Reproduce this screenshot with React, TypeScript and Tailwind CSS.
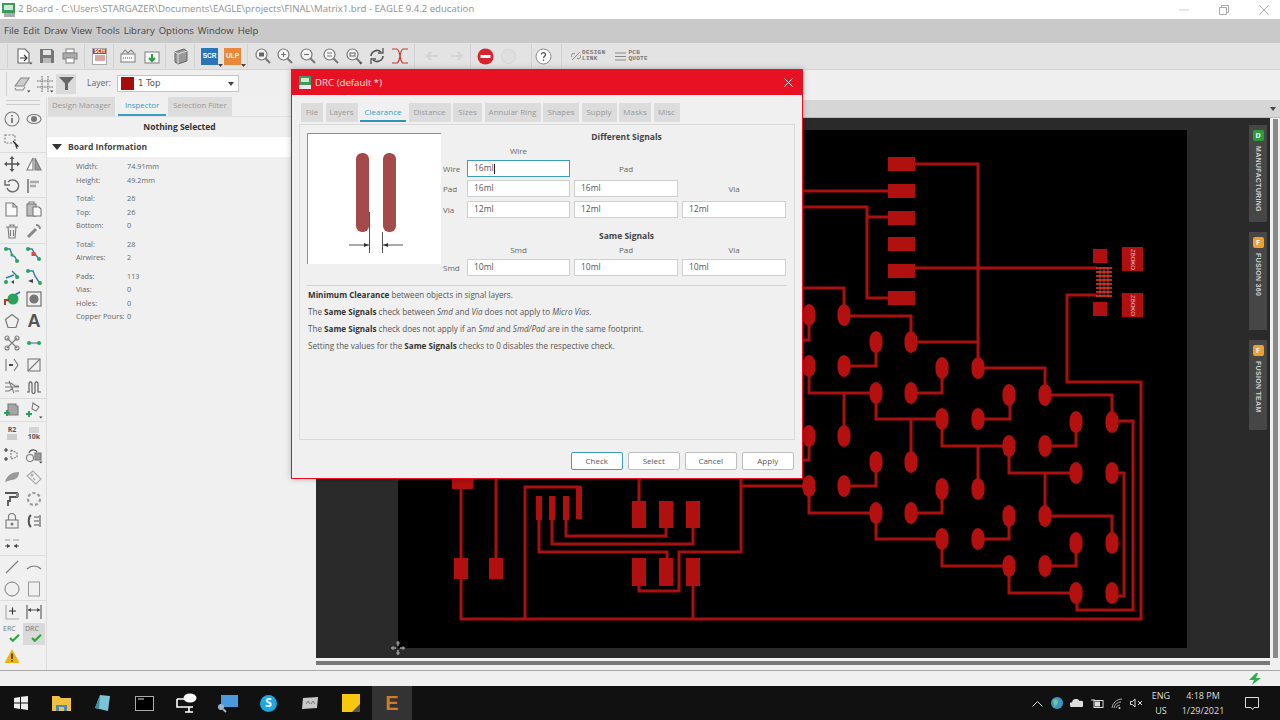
import React from "react";

const F = { fontFamily: '"Open Sans", "Liberation Sans", sans-serif' };

const Ic = ({ children, w = 18, h = 18, c = "#7a7a7a", sw = 1.1, vb }: any) => (
  <svg width={w} height={h} viewBox={vb || "0 0 18 18"} fill="none" stroke={c} strokeWidth={sw}>
    {children}
  </svg>
);
const Drop = () => <path d="M14 15.5h3.5l-1.75 2z" fill="#444" stroke="none" />;

const G = "#27a35a";
const B = "#2d7fa8";

const tools: any[][] = [
  [
    <Ic><circle cx="9" cy="9" r="7" /><path d="M9 8v5M9 5v1.4" strokeWidth="1.6" stroke="#666" /></Ic>,
    <Ic><ellipse cx="9" cy="9" rx="7" ry="4.5" /><circle cx="9" cy="9" r="3" fill="#777" stroke="none" /></Ic>,
  ],
  [
    <Ic><rect x="2" y="3" width="10" height="8" strokeDasharray="2 1.5" /><path d="M10 9l5 5-2 .3 1.2 2.4" stroke="#333" fill="#333" /></Ic>,
    null,
  ],
  "sep",
  [
    <Ic c="#555" sw="1.5"><path d="M9 2v14M2 9h14" /><path d="M9 1l2.5 3h-5zM9 17l2.5-3h-5zM1 9l3-2.5v5zM17 9l-3-2.5v5z" fill="#555" stroke="none" /></Ic>,
    <Ic><path d="M8 3v12H2z" fill="#fff" /><path d="M10 3v12h6z" fill="#999" /></Ic>,
  ],
  [
    <Ic c="#666" sw="1.4"><path d="M5 5a6 6 0 1 1-1 6" /><path d="M2 3v5h5" /></Ic>,
    <Ic><path d="M3 2v14" stroke="#666" strokeWidth="1.4" /><path d="M5 5h9M5 9h6" strokeWidth="2.4" stroke="#aaa" /></Ic>,
  ],
  "sep",
  [
    <Ic><path d="M3 3h7l4 4v9H3z" fill="#f8f8f8" /><path d="M10 3v4h4" /></Ic>,
    <Ic><rect x="2" y="4" width="9" height="12" fill="#bbb" /><path d="M8 7h6l2 2v7H8z" fill="#f8f8f8" /><path d="M4 4V2h5v2" /></Ic>,
  ],
  [
    <Ic><path d="M3 5h12M5 5l1 11h6l1-11M7 5V3h4v2" /><path d="M7.5 8v6M10.5 8v6" /></Ic>,
    <Ic c="#888" sw="3"><path d="M3 15l8-8" /><path d="M11 3a4 4 0 0 1 4 4" strokeWidth="2" /></Ic>,
  ],
  "sep2",
  [
    <Ic c={B} sw="1.4"><path d="M3 3h4l2 6 3 2 2 4" /><circle cx="3" cy="3" r="2" fill={G} stroke="none" /><circle cx="14" cy="15" r="2" fill={G} stroke="none" /><circle cx="9" cy="9" r="1.6" fill={G} stroke="none" /></Ic>,
    <Ic c={B} sw="1.4"><path d="M3 3h4l3 5 4 5" /><circle cx="3" cy="3" r="2" fill={G} stroke="none" /><rect x="6.5" y="6" width="4" height="4" fill="#d84b4b" stroke="none" /><circle cx="14" cy="13" r="2" fill={G} stroke="none" /></Ic>,
  ],
  [
    <Ic c={B} sw="1.4"><path d="M9 3l7 7M3 10l8-3" /><circle cx="3" cy="14" r="2" fill={G} stroke="none" /><circle cx="14" cy="9" r="2" fill={G} stroke="none" /><path d="M8 14l3-2v4z" fill="#444" stroke="none" /></Ic>,
    <Ic c={B} sw="1.4"><path d="M3 3h5l2 5 4 6" /><circle cx="3" cy="3" r="2" fill={G} stroke="none" /><circle cx="15" cy="15" r="2" fill={G} stroke="none" /><path d="M3 13l5-2v4z" fill="#444" stroke="none" /></Ic>,
  ],
  [
    <Ic c="#b0392b" sw="2"><circle cx="10" cy="9" r="5.5" fill={G} stroke="none" /><path d="M2 15v-5h4" /><path d="M12 5l5-3" stroke={B} /></Ic>,
    <Ic><rect x="2" y="2" width="14" height="14" stroke="#666" /><circle cx="9" cy="9" r="4.6" fill="#777" stroke="none" /></Ic>,
  ],
  [
    <Ic sw="1.2"><path d="M9 2.5l6.5 5-2.5 8H5l-2.5-8z" /></Ic>,
    <span className="text-[18px] font-bold leading-none text-[#555]" style={{ fontFamily: '"Liberation Sans", sans-serif' }}>A</span>,
  ],
  [
    <Ic><path d="M4 4l10 10M14 4L4 14" /><circle cx="4" cy="4" r="2" /><circle cx="14" cy="4" r="2" /><circle cx="4" cy="14" r="2" /><circle cx="14" cy="14" r="2" /></Ic>,
    <Ic c={B}><path d="M4 9h10" /><circle cx="4" cy="9" r="2" fill={G} stroke="none" /><circle cx="14" cy="9" r="2" fill={G} stroke="none" /></Ic>,
  ],
  [
    <Ic><path d="M3 3v12M11 3l4 6-4 6" /><path d="M6 9h4" stroke="#333" strokeWidth="1.8" /></Ic>,
    <Ic><rect x="3" y="3" width="12" height="12" /><path d="M3 15L15 3" /></Ic>,
  ],
  [
    <Ic><path d="M2 5h6l4 3h4M2 9h14M2 13h4l4-3M12 13h4M6 3l5 12" /></Ic>,
    <Ic c="#555"><path d="M2 14h2V6c0-3 3-3 3 0v8c0 2 3 2 3 0V6c0-3 3-3 3 0v8h3" /></Ic>,
  ],
  "sep",
  [
    <Ic><path d="M5 3h8v2h2v9H5z" fill="#a5a5a5" /><path d="M1 12h6M4 9v6" stroke="#27a35a" strokeWidth="2" /></Ic>,
    <Ic><path d="M8 2l6 4-3 4-4-2z" fill="#f4f4f4" /><path d="M1 13h6M4 10v6" stroke="#27a35a" strokeWidth="2" /><Drop /></Ic>,
  ],
  "sep",
  [
    <div className="flex flex-col items-center leading-none"><span className="text-[7px] font-bold text-[#555]">R2</span><span className="mt-px h-[6px] w-[10px] bg-[#ccc]" /></div>,
    <div className="flex flex-col items-center leading-none"><span className="h-[6px] w-[10px] bg-[#d4d4d4]" /><span className="text-[7px] font-bold text-[#555]">10k</span></div>,
  ],
  [
    <Ic><path d="M8 4l6 3v4l-6 2z" strokeDasharray="2 1" /><path d="M1 4h4M3 2v4M1 13h4M3 11v4" stroke="#333" /></Ic>,
    <Ic><circle cx="5" cy="12" r="3.5" /><rect x="10" y="7" width="6" height="7" fill="#999" /><path d="M4 7c1-4 7-4 8-1" stroke="#555" /><Drop /></Ic>,
  ],
  [
    <Ic c="#999" sw="0"><path d="M2 14C4 7 9 4 16 4c0 6-4 8-8 8l-3 1z" fill="#999" /></Ic>,
    <Ic c="#aaa"><path d="M2 8l6-5 8 8-5 5z" /><circle cx="7" cy="7" r="1" /><path d="M8 10l2 2" /></Ic>,
  ],
  [
    <Ic c="#555" sw="1.8"><path d="M2 3h12v4H7v4H5v5" /><rect x="13" y="3" width="3" height="4" fill="#888" stroke="none" /></Ic>,
    <Ic c="#999" sw="2.2"><circle cx="9" cy="9" r="6" strokeDasharray="3 2.2" /></Ic>,
  ],
  [
    <Ic><rect x="3" y="8" width="12" height="8" /><path d="M5.5 8V5a3.5 3.5 0 0 1 7 0v3" /><circle cx="9" cy="12" r="1" fill="#666" /></Ic>,
    <Ic c="#555"><path d="M6 3C3 5 3 13 6 15" strokeWidth="2" /><path d="M9 5h5M9 9h5M9 13h5M15 3v12" /></Ic>,
  ],
  [
    <Ic c="#444"><path d="M2 6h5M10 6h6" stroke="#999" /><path d="M2 12h5M16 12h-5" /><path d="M7 12l-3-2.2v4.4zM11 12l3-2.2v4.4z" fill="#444" stroke="none" /></Ic>,
    null,
  ],
  "sep2",
  [
    <Ic><path d="M3 15L15 3" /></Ic>,
    <Ic><path d="M2 11c4-4 10-4 14 0" /></Ic>,
  ],
  [
    <Ic sw="1"><circle cx="9" cy="9" r="7" /></Ic>,
    <Ic sw="1" c="#999"><rect x="3.5" y="2" width="11" height="14" /></Ic>,
  ],
  "sep",
  [
    <Ic><path d="M3 2v14h13" stroke="#aaa" /><path d="M6 8h7M9.5 4.5v7" stroke="#333" /></Ic>,
    <Ic c="#555"><path d="M2 2v14M16 2v14M3 7h12" /><path d="M3 7l3-2v4zM15 7l-3-2v4z" fill="#444" stroke="none" /></Ic>,
  ],
  [
    <div className="relative h-[18px] w-[18px]"><span className="absolute left-0 top-0 text-[7px] leading-[8px] text-[#777]">ERC</span><svg className="absolute left-[6px] top-[8px]" width="11" height="9" viewBox="0 0 13 11"><path d="M1 6l3.5 3.500L12 2" stroke="#2aa838" strokeWidth="2.6" fill="none" /></svg></div>,
    <div className="relative h-[18px] w-[18px]"><span className="absolute left-0 top-0 text-[7px] leading-[8px] text-[#777]">DRC</span><svg className="absolute left-[6px] top-[8px]" width="11" height="9" viewBox="0 0 13 11"><path d="M1 6l3.5 3.500L12 2" stroke="#2aa838" strokeWidth="2.6" fill="none" /></svg></div>,
  ],
  [
    <Ic sw="0"><path d="M9 2l7.5 14h-15z" fill="#eeb211" /><path d="M8.2 6.5h1.6v5.5H8.2zM8.2 13h1.6v1.6H8.2z" fill="#333" /></Ic>,
    null,
  ],
];

const ToolColumn = () => (
  <div className="flex h-full w-[47px] shrink-0 flex-col border-r border-[#dcdcdc] bg-[#f0f0f0]" style={F}>
    <div className="flex h-[11px] flex-col justify-center gap-[3px] px-[6px]">
      <div className="h-px bg-[#ccc]" />
      <div className="h-px bg-[#ccc]" />
    </div>
    {tools.map((r, i) =>
      r === ("sep" as any) ? (
        <div key={i} className="h-px bg-[#dcdcdc]" />
      ) : r === ("sep2" as any) ? (
        <div key={i} className="h-[2px] border-b border-[#dcdcdc]" />
      ) : (
        <div key={i} className="flex h-[22px] pl-px">
          {r.map((x: any, j: number) => (
            <div key={j} className={`flex h-[22px] w-[22px] items-center justify-center ${i === tools.length - 2 && j === 1 ? "bg-[#d9d9d9]" : ""}`}>
              {x}
            </div>
          ))}
        </div>
      )
    )}
  </div>
);

const info = [
  ["Width:", "74.91mm", 0],
  ["Height:", "49.2mm", 0],
  ["Total:", "26", 5],
  ["Top:", "26", 0],
  ["Bottom:", "0", 0],
  ["Total:", "28", 5],
  ["Airwires:", "2", 0],
  ["Pads:", "113", 5],
  ["Vias:", "0", 0],
  ["Holes:", "0", 0],
  ["Copper Pours:", "0", 0],
] as [string, string, number][];

const LeftPanel = () => (
  <div className="flex h-full w-[269px] shrink-0 flex-col bg-[#f0f0f0]" style={F}>
    <div className="flex h-[20px] items-stretch gap-[2px] border-b border-[#e2e2e2] pl-px text-[7.8px] leading-[17px]">
      <div className="w-[67px] bg-[#dcdcdc] text-center text-[#999]">Design Manager</div>
      <div className="ml-[1px] w-[48px] border-b-2 border-[#3a9ec2] text-center text-[#3a9ec2]">Inspector</div>
      <div className="w-[64px] bg-[#dcdcdc] text-center text-[#999]">Selection Filter</div>
    </div>
    <div className="flex h-[20px] items-center justify-center pr-[4px] text-[8.5px] font-bold text-[#333]">Nothing Selected</div>
    <div className="flex h-[20px] items-center bg-white pl-[5px] text-[8.5px] font-bold text-[#444]">
      <svg width="10" height="6" viewBox="0 0 10 6"><path d="M0 0h10L5 6z" fill="#333" /></svg>
      <span className="ml-[6px]">Board Information</span>
    </div>
    <div className="pl-[29px] pt-[3px] text-[7.3px] text-[#666]">
      {info.map(([a, b, m], i) => (
        <div key={i} className="flex h-[13.5px] items-center" style={{ marginTop: m }}>
          <span className="w-[51px] shrink-0 whitespace-nowrap">{a}</span>
          <span>{b}</span>
        </div>
      ))}
    </div>
  </div>
);

const traces = [
  "M915 164H978V370",
  "M800 191H888",
  "M800 207H867V298H888M867 217H888",
  "M915 268H1097",
  "M1097 295H1067V382H1141V619H461V478",
  "M800 288H844V315M844 316H911V342H978",
  "M809 315V340H800",
  "M844 366H876V342",
  "M978 368H1045V395",
  "M942 368V393H911",
  "M809 366V393H876V419H942V446H1009V473H1076",
  "M844 393V436",
  "M911 419V462",
  "M978 446V489",
  "M1045 473V516",
  "M978 419H1010V395",
  "M1045 395H1112V422",
  "M1045 446H1076V422",
  "M1112 421H1133V610H1077V593",
  "M1112 473H1124V596H1112",
  "M844 486H876V462",
  "M809 436V460H800",
  "M800 486H809V513H876V539H942V566H1009V593H1076",
  "M911 513H942V489",
  "M978 539H1009V516",
  "M1045 566H1076V543",
  "M1045 516H1112V543",
  "M496 478V560",
  "M525 619V487H580V500",
  "M539 510V552H667V560",
  "M552 510V544H693V525",
  "M566 510V536H666V525",
  "M639 478V502",
  "M639 584V591H679V552H741V478",
  "M741 486H800",
  "M693 584V619",
];

const ovals = [
  [844, 315], [809, 315], [911, 342], [876, 342], [809, 366], [844, 366], [942, 368], [978, 368],
  [876, 393], [911, 393], [1009, 395], [1045, 395], [942, 419], [978, 419], [1076, 422], [1112, 422],
  [809, 436], [844, 436], [1009, 446], [1045, 446], [876, 462], [911, 462], [1076, 473], [1112, 473],
  [809, 486], [844, 486], [942, 489], [978, 489], [876, 513], [911, 513], [1009, 516], [1045, 516],
  [942, 539], [978, 539], [1076, 543], [1112, 543], [1009, 566], [1045, 566], [1076, 593], [1112, 593],
];

const rects = [
  [888, 157, 27, 14], [888, 184, 27, 14], [888, 211, 27, 14], [888, 237, 27, 14], [888, 264, 27, 14], [888, 291, 27, 14],
  [1093, 249, 14, 14], [1093, 302, 14, 14], [1122, 247, 21, 24], [1122, 293, 21, 24],
  [452, 470, 21, 19], [454, 558, 14, 21], [489, 558, 14, 21],
  [576, 487, 6, 32], [536, 496, 6, 24], [549, 496, 6, 24], [563, 496, 6, 24],
  [632, 501, 14, 27], [659, 501, 14, 27], [686, 501, 14, 27], [632, 558, 14, 28], [659, 558, 14, 28], [686, 558, 14, 28],
];

const Board = () => (
  <svg className="ml-[82px] mt-[12px] shrink-0" width="789" height="518" viewBox="398 130 789 518">
    <rect x="398" y="130" width="789" height="518" fill="#000" />
    <path d={traces.join(" ")} stroke="#ab1010" strokeWidth="3" fill="none" />
    {rects.map(([x, y, w, h], i) => (
      <rect key={i} x={x} y={y} width={w} height={h} fill="#b01010" />
    ))}
    {ovals.map(([x, y], i) => (
      <rect key={i} x={x - 6.5} y={y - 11} width="13" height="22" rx="6.5" ry="9" fill="#b51010" />
    ))}
    {[268, 272, 276, 280, 284, 288, 292, 296].map((y) => (
      <path key={y} d={`M1096 ${y}H1112`} stroke="#e23a1e" strokeWidth="1.6" />
    ))}
    <path d="M1100 267V297M1104 267V297M1108 267V297" stroke="#e23a1e" strokeWidth="1" />
    <text transform="translate(1131 249) rotate(90)" fontSize="6" fill="#f3c8c8" fontFamily="Liberation Sans">ZBOKO</text>
    <text transform="translate(1131 295) rotate(90)" fontSize="6" fill="#f3c8c8" fontFamily="Liberation Sans">ZBOKO</text>
  </svg>
);

const SideTab = ({ t, h, c, l }: any) => (
  <div className="flex w-[18px] flex-col items-center bg-[#464646] pt-[5px]" style={{ height: h }}>
    <div className="flex h-[11px] w-[11px] items-center justify-center rounded-[2px] text-[7px] font-bold leading-none" style={{ background: c, color: "#fff" }}>{l}</div>
    <span className="mt-[5px] text-[7px] font-bold tracking-[0.3px] text-[#d0d0d0] [writing-mode:vertical-rl]" style={{ fontFamily: '"Liberation Sans", sans-serif' }}>{t}</span>
  </div>
);

const Canvas = () => (
  <div className="relative flex min-w-0 flex-1 flex-col" style={F}>
    <div className="h-[3px] bg-[#f0f0f0]" />
    <div className="flex h-[18px] items-center justify-end border-b border-[#bbb] bg-[#d6d6d6] pr-[4px]">
      <svg width="6" height="4" viewBox="0 0 6 4"><path d="M0 0h6L3 4z" fill="#444" /></svg>
    </div>
    <div className="flex min-h-0 flex-1">
      <div className="flex min-w-0 flex-1 bg-[#2a2a2a]">
        <Board />
        <div className="flex-1" />
        <div className="mr-[3px] mt-[7px] flex flex-col gap-[10px]">
          <SideTab t="MANUFACTURING" h={97} c="#2d9c3c" l="D" />
          <SideTab t="FUSION 360" h={98} c="#eda128" l="F" />
          <SideTab t="FUSION TEAM" h={90} c="#eda128" l="F" />
        </div>
      </div>
      <div className="flex w-[10px] justify-center bg-[#f0f0f0] pt-px">
        <div className="h-full w-[5px] bg-[#8a8a8a]" />
      </div>
    </div>
    <div className="h-[12px] bg-[#f0f0f0] pr-[10px] pt-[3px]">
      <div className="h-[4px] bg-[#787878]" />
    </div>
  </div>
);

const tabs = [
  ["File", 22], ["Layers", 32], ["Clearance", 46], ["Distance", 42], ["Sizes", 29],
  ["Annular Ring", 56], ["Shapes", 36], ["Supply", 35], ["Masks", 32], ["Misc", 26],
] as [string, number][];

const Inp = ({ v, focus }: any) => (
  <div className={`flex h-[17px] items-center bg-white pl-[6px] text-[8.5px] text-[#555] ${focus ? "border border-[#3d9dbd]" : "border border-[#cfcfcf]"}`}>
    {v}
    {focus && <span className="ml-[0.5px] h-[10px] w-px bg-[#222]" />}
  </div>
);

const FRow = ({ children, cls = "h-[17px]" }: any) => (
  <div className={`grid grid-cols-[20px_103px_104px_104px] items-center gap-x-[4px] text-[8px] text-[#666] ${cls}`}>{children}</div>
);
const Hd = ({ children }: any) => <div className="text-center">{children}</div>;

const Dialog = () => (
  <div className="absolute left-[291px] top-[69px] flex h-[410px] w-[512px] flex-col border border-[#e81123] bg-[#f0f0f0] shadow-[0_0_6px_rgba(0,0,0,0.25)]" style={F}>
    <div className="flex h-[25px] shrink-0 items-center bg-[#e81123] pl-[7px] pr-[9px] text-[#fde2e4]">
      <svg width="12" height="13" viewBox="0 0 12 13"><rect x="0" y="0" width="12" height="9" fill="#3d9a5c" /><rect x="2" y="2" width="8" height="4" fill="#cfe8d4" /><rect x="0" y="9" width="12" height="4" fill="#e8e8e8" /></svg>
      <span className="ml-[4px] text-[9.7px] leading-none">DRC (default *)</span>
      <svg className="ml-auto" width="9" height="9" viewBox="0 0 9 9"><path d="M0.5 0.5l8 8M8.5 0.5l-8 8" stroke="#fff" strokeWidth="1" /></svg>
    </div>
    <div className="mt-[8px] flex h-[19px] items-stretch gap-[2.5px] pl-[9px] text-[8px] leading-[18px]">
      {tabs.map(([t, w]) => (
        <div key={t} style={{ width: w }} className={`text-center ${t === "Clearance" ? "border-b-2 border-[#2f93b8] text-[#3a9ec2]" : "bg-[#dcdcdc] text-[#999]"}`}>{t}</div>
      ))}
    </div>
    <div className="ml-[7px] mt-[2px] h-[316px] w-[496px] border border-[#d9d9d9] pl-[7px] pt-[8px]">
      <div className="flex h-[143px] items-start">
        <svg className="shrink-0" width="134" height="131" viewBox="307 133 134 131">
          <rect x="307" y="133" width="134" height="131" fill="#fff" />
          <path d="M307.5 264V133.5H441" stroke="#8c8c8c" fill="none" />
          <rect x="356" y="153" width="13" height="79" rx="6" fill="#a54a4a" />
          <rect x="383" y="153" width="13" height="79" rx="6" fill="#a54a4a" />
          <path d="M369.5 212V253M382.5 232V253" stroke="#555" strokeWidth="1" />
          <path d="M349 245H369M383 245H403" stroke="#555" strokeWidth="1" />
          <path d="M369 245l-5-2v4zM383 245l5-2v4z" fill="#333" />
        </svg>
        <div className="ml-[2px] -mt-[3px]">
          <div className="h-[14px] pl-[24px] text-center text-[8.5px] font-bold leading-[14px] text-[#444]">Different Signals</div>
          <FRow cls="h-[14px]"><span /><Hd>Wire</Hd></FRow>
          <FRow cls="mt-[2px] h-[17px]"><span>Wire</span><Inp v="16ml" focus /><Hd>Pad</Hd></FRow>
          <FRow cls="mt-[3px] h-[17px]"><span>Pad</span><Inp v="16ml" /><Inp v="16ml" /><Hd>Via</Hd></FRow>
          <FRow cls="mt-[4px] h-[17px]"><span>Via</span><Inp v="12ml" /><Inp v="12ml" /><Inp v="12ml" /></FRow>
          <div className="mt-[11px] h-[14px] pl-[24px] text-center text-[8.5px] font-bold leading-[14px] text-[#444]">Same Signals</div>
          <FRow cls="h-[14px]"><span /><Hd>Smd</Hd><Hd>Pad</Hd><Hd>Via</Hd></FRow>
          <FRow cls="mt-[2px] h-[17px]"><span>Smd</span><Inp v="10ml" /><Inp v="10ml" /><Inp v="10ml" /></FRow>
        </div>
      </div>
      <div className="mr-[7px] mt-[9px] h-px bg-[#d4d4d4]" />
      <div className="ml-px flex flex-col text-[8.1px] leading-[17.3px] text-[#555]">
        <p className="-mt-[0.5px]"><b className="text-[#333]">Minimum Clearance</b> between objects in signal layers.</p>
        <p>The <b className="text-[#333]">Same Signals</b> check between <i>Smd</i> and <i>Via</i> does not apply to <i>Micro Vias</i>.</p>
        <p>The <b className="text-[#333]">Same Signals</b> check does not apply if an <i>Smd</i> and <i>Smd/Pad</i> are in the same footprint.</p>
        <p>Setting the values for the <b className="text-[#333]">Same Signals</b> checks to 0 disables the respective check.</p>
      </div>
    </div>
    <div className="mr-[8px] mt-[12px] flex justify-end gap-[4.5px] text-[8px] text-[#555]">
      {["Check", "Select", "Cancel", "Apply"].map((b, i) => (
        <div key={b} className={`flex h-[18px] w-[52.5px] items-center justify-center rounded-[2px] bg-white ${i === 0 ? "border border-[#3d9dbd]" : "border border-[#bdbdbd]"}`}>{b}</div>
      ))}
    </div>
  </div>
);

const Sep = ({ cls }: any) => <div className={`h-[24px] w-px shrink-0 bg-[#d2d2d2] ${cls}`} />;
const T = ({ children }: any) => <div className="relative flex h-[24px] w-[23px] shrink-0 items-center justify-center">{children}</div>;
const Mag = ({ s }: any) => (
  <Ic c="#777" sw="1.2"><circle cx="7.5" cy="7.5" r="5.5" fill="#f5f5f5" /><path d="M11.5 11.5l4.5 4.5" strokeWidth="2" />{s}</Ic>
);
const Badge = ({ t, c }: any) => (
  <div className="relative">
    <div className="flex h-[17px] w-[17px] items-center justify-center text-[6.5px] font-bold leading-none text-white" style={{ background: c, fontFamily: '"Liberation Sans", sans-serif' }}>{t}</div>
    <svg className="absolute -bottom-[2px] -right-[5px]" width="5" height="3" viewBox="0 0 5 3"><path d="M0 0h5L2.5 3z" fill="#444" /></svg>
  </div>
);

const Toolbar = () => (
  <div className="flex h-[27px] items-center border-b border-[#d2d2d2] bg-[#e3e3e3] pl-[7px]" style={F}>
    <Sep cls="mr-[4px]" />
    <T><Ic c="#666"><path d="M3 2h7l4 4v10H3z" fill="#fff" /><path d="M5 11h7M9 8l3 3-3 3" stroke="#333" /><Drop /></Ic></T>
    <T><Ic c="#777" sw="0"><path d="M2 2h12l2 2v12H2z" fill="#777" /><rect x="5" y="3" width="8" height="5" fill="#e5e5e5" /><rect x="5" y="11" width="8" height="5" fill="#bbb" /></Ic></T>
    <T><Ic c="#888"><rect x="5" y="2" width="8" height="4" fill="#fff" /><rect x="2" y="6" width="14" height="6" fill="#aaa" /><rect x="5" y="11" width="8" height="5" fill="#fff" /></Ic></T>
    <Sep cls="mx-[3px]" />
    <T>
      <div className="flex h-[17px] w-[15px] flex-col items-center border border-[#aaa] bg-white leading-none">
        <span className="w-full bg-[#c0392b] text-center text-[5.5px] font-bold text-white">SCH</span>
        <span className="mt-px h-[6px] w-[10px] bg-[#d9a7a0]" />
      </div>
    </T>
    <Sep cls="ml-[2px] mr-[2px]" />
    <T><Ic c="#888"><rect x="2" y="7" width="14" height="8" fill="#f8f8f8" /><path d="M3 7l3-4 3 3 3-3 3 3" /><path d="M4 11h10" strokeDasharray="1 1" stroke="#555" /></Ic></T>
    <div className="w-px" />
    <T><Ic c="#888"><rect x="2" y="5" width="14" height="11" fill="#f8f8f8" /><path d="M9 7v7M6 11l3 3 3-3" stroke="#2d9c3c" strokeWidth="2" /></Ic></T>
    <Sep cls="ml-[2px] mr-[3px]" />
    <T><Ic c="#666" sw="1"><path d="M3 5l9-3 3 2v10l-9 3-3-2z" fill="#999" /><path d="M3 5l3 2 9-3M6 7v10" stroke="#ddd" /></Ic></T>
    <Sep cls="ml-[2px] mr-[3px]" />
    <T><Badge t="SCR" c="#2a75b8" /></T>
    <T><Badge t="ULP" c="#e8883a" /></T>
    <Sep cls="mx-[3px]" />
    <div className="w-[22px] shrink-0"><T><Mag s={<rect x="5" y="5.5" width="5" height="4" fill="#666" stroke="none" />} /></T></div>
    <T><Mag s={<path d="M5 7.5h5M7.5 5v5" />} /></T>
    <T><Mag s={<path d="M5 7.5h5" />} /></T>
    <T><Mag s={<path d="M5 6h5M5 9h5" />} /></T>
    <T><Mag s={<><rect x="5" y="6" width="5" height="3" /><Drop /></>} /></T>
    <T><Ic c="#555" sw="1.6"><path d="M3 9a6 6 0 0 1 10-4" /><path d="M15 9a6 6 0 0 1-10 4" /><path d="M15 1v5h-5M3 17v-5h5" strokeWidth="1.3" /></Ic></T>
    <T><Ic c="#c0392b" sw="1.2"><path d="M1 2h5c3 0 3 14 6 14h5M1 16h5c3 0 3-14 6-14h5" /></Ic></T>
    <Sep cls="ml-[3px] mr-[6px]" />
    <T><Ic c="#d4d4d4" sw="2"><path d="M3 9h11M7 5L3 9l4 4" /></Ic></T>
    <T><Ic c="#d4d4d4" sw="2"><path d="M15 9H4M11 5l4 4-4 4" /></Ic></T>
    <Sep cls="mx-[3px]" />
    <T><svg width="17" height="17" viewBox="0 0 17 17"><circle cx="8.5" cy="8.5" r="8" fill="#d9232e" /><rect x="3.5" y="7" width="10" height="3" fill="#fff" /></svg></T>
    <T><svg width="15" height="15" viewBox="0 0 15 15"><circle cx="7.5" cy="7.5" r="7" fill="#dfdfdf" stroke="#d4d4d4" /></svg></T>
    <Sep cls="ml-[11px] mr-[0px]" />
    <T><svg width="17" height="17" viewBox="0 0 17 17"><circle cx="8.5" cy="8.5" r="7.5" fill="#fff" stroke="#888" /><path d="M6.5 6.5c0-2.6 4-2.6 4 0 0 1.8-2 1.6-2 3.5M8.5 11.5v1.5" stroke="#555" fill="none" strokeWidth="1.3" /></svg></T>
    <Sep cls="ml-[6px] mr-[9px]" />
    <svg width="10" height="10" viewBox="0 0 10 10"><path d="M1 9l8-8M1 6a2 2 0 0 1 3-3M9 4a2 2 0 0 1-3 3" stroke="#888" fill="none" /></svg>
    <div className="ml-[1px] text-[6px] font-bold leading-[6px] tracking-[0.3px] text-[#777]" style={{ fontFamily: '"Liberation Mono", monospace' }}>DESIGN<br />LINK</div>
    <svg className="ml-[10px]" width="11" height="9" viewBox="0 0 11 9"><path d="M0 1h11M0 4.5h11M0 8h11" stroke="#888" /></svg>
    <div className="ml-[2px] text-[6px] font-bold leading-[6px] tracking-[0.3px] text-[#777]" style={{ fontFamily: '"Liberation Mono", monospace' }}>PCB<br />QUOTE</div>
  </div>
);

const LayerBar = () => (
  <div className="flex h-[27px] items-center bg-[#efefef] pl-[6px]" style={F}>
    <Sep cls="mr-[3px]" />
    <T><Ic c="#888"><path d="M2 11l6-8h8l-5 8z" fill="#ccc" /><path d="M2 13l1 2h7l2-3" /><Drop /></Ic></T>
    <T><Ic c="#666" sw="1"><path d="M6 1v16M12 1v16M1 6h16M1 12h16" strokeDasharray="1.6 .8" /><Drop /></Ic></T>
    <div className="flex h-[20px] w-[20px] items-center justify-center bg-[#dadada]">
      <svg width="15" height="13" viewBox="0 0 15 13"><path d="M0 0h15L9 6.5V13H6V6.5z" fill="#666" /></svg>
    </div>
    <span className="ml-[11px] text-[8.5px] text-[#666]">Layer:</span>
    <div className="ml-[6px] flex h-[17px] w-[122px] items-center border border-[#c5c5c5] bg-white pl-[3px] pr-[4px]">
      <span className="h-[13px] w-[13px] bg-[#a50d0d]" />
      <span className="ml-[4px] text-[8.5px] text-[#555]" style={{ fontFamily: '"DejaVu Sans", sans-serif' }}>1 Top</span>
      <svg className="ml-auto" width="6" height="4" viewBox="0 0 6 4"><path d="M0 0h6L3 4z" fill="#444" /></svg>
    </div>
  </div>
);

const Taskbar = () => (
  <div className="flex h-[34px] shrink-0 items-center bg-[#111] text-white" style={F}>
    <div className="flex w-[41px] justify-center">
      <svg width="14" height="14" viewBox="0 0 14 14"><path d="M0 2l6-1v5.500H0zM7 .8L14 0v6.500H7zM0 7.500h6V13l-6-1zM7 7.500h7V14l-7-1z" fill="#eee" /></svg>
    </div>
    <div className="flex h-[34px] w-[41px] items-center justify-center">
      <svg width="19" height="17" viewBox="0 0 19 17"><path d="M0 1h7l2 2h10v13H0z" fill="#f0c040" /><rect x="4" y="10" width="11" height="6" fill="#4a8ab8" /><rect x="7" y="12" width="5" height="4" fill="#f0c040" /></svg>
    </div>
    <div className="flex h-[34px] w-[42px] items-center justify-center">
      <svg width="18" height="18" viewBox="0 0 18 18"><path d="M6 1l10 1-2 15-13-3z" fill="#7cc4d4" /><path d="M6 1l-5 13 4 1z" fill="#3a8aa0" /></svg>
    </div>
    <div className="flex h-[34px] w-[41px] items-center justify-center">
      <svg width="19" height="15" viewBox="0 0 19 15"><rect x=".5" y=".5" width="18" height="14" fill="#000" stroke="#aaa" /><path d="M3 3h6" stroke="#ddd" /></svg>
    </div>
    <div className="flex h-[34px] w-[42px] items-center justify-center">
      <svg width="21" height="20" viewBox="0 0 21 20"><path d="M1 6h13M1 6v8h16" stroke="#fff" strokeWidth="1.6" fill="none" /><ellipse cx="14" cy="5" rx="6.500" ry="4.500" fill="#fff" /><path d="M9 19h8M13 14v5" stroke="#fff" strokeWidth="1.6" /></svg>
    </div>
    <div className="flex h-[34px] w-[41px] items-center justify-center">
      <svg width="21" height="19" viewBox="0 0 21 19"><rect x="4" y="1" width="17" height="12" fill="#4a9ae0" /><circle cx="4" cy="13" r="3" fill="#9ab4c8" /><path d="M6 15l3 3" stroke="#9ab4c8" strokeWidth="2" /></svg>
    </div>
    <div className="flex h-[34px] w-[41px] items-center justify-center">
      <div className="flex h-[17px] w-[17px] items-center justify-center rounded-full bg-[#1fa8e0] text-[12px] font-bold leading-none text-white">S</div>
    </div>
    <div className="flex h-[34px] w-[41px] items-center justify-center">
      <svg width="18" height="15" viewBox="0 0 18 15"><path d="M2 2l15-1-1 11-15 1z" fill="#c9c9c9" /><path d="M5 8l2-3 2 3M10 8l2-3 2 3" stroke="#777" fill="none" /></svg>
    </div>
    <div className="flex h-[34px] w-[42px] items-center justify-center">
      <svg width="18" height="18" viewBox="0 0 18 18"><rect width="18" height="18" fill="#f6c90e" /><path d="M18 10v8h-8z" fill="#555" /></svg>
    </div>
    <div className="flex h-[34px] w-[40px] items-center justify-center bg-[#333]">
      <span className="text-[20px] font-bold leading-none text-[#d07a2c]" style={{ fontFamily: '"Liberation Sans", sans-serif' }}>E</span>
    </div>
    <div className="flex-1" />
    <svg width="11" height="7" viewBox="0 0 11 7" className="mr-[8px]"><path d="M.5 6.500l5-5 5 5" stroke="#ddd" fill="none" /></svg>
    <svg width="12" height="12" viewBox="0 0 12 12" className="mr-[7px]"><circle cx="6" cy="6" r="6" fill="#3a98c8" /><path d="M2 3c3-2 5 0 5 2s-3 3-3 6" fill="#7fc08a" /></svg>
    <svg width="13" height="8" viewBox="0 0 13 8" className="mr-[8px]"><path d="M1 8a2.500 2.500 0 0 1 1-4.800A4 4 0 0 1 9.500 2 3 3 0 0 1 12 8z" fill="#ddd" /></svg>
    <svg width="13" height="9" viewBox="0 0 13 9" className="mr-[7px]"><path d="M0 1h4" stroke="#ddd" /><rect x="3" y="1.500" width="9" height="7" fill="none" stroke="#ddd" /><rect x="4" y="2.500" width="5" height="5" fill="#ddd" /></svg>
    <svg width="12" height="11" viewBox="0 0 12 11" className="mr-[7px]"><path d="M1 10a10 10 0 0 1 10-9M3 10a7 7 0 0 1 7-6M5 10a4 4 0 0 1 4-3" stroke="#aaa" fill="none" /><circle cx="8.500" cy="10" r="1" fill="#ddd" /></svg>
    <svg width="13" height="10" viewBox="0 0 13 10" className="mr-[8px]"><path d="M.5 3.500h2L5 1v8L2.500 6.500h-2z" stroke="#ddd" fill="none" /><path d="M8 3l4 4M12 3L8 7" stroke="#ddd" /></svg>
    <div className="mr-[7px] flex w-[20px] flex-col items-center text-[9px] leading-[15px] text-[#ddd]"><span>ENG</span><span>US</span></div>
    <div className="flex w-[50px] flex-col items-center text-[9px] leading-[15px] text-[#ddd]"><span>4:18 PM</span><span>1/29/2021</span></div>
    <svg width="14" height="13" viewBox="0 0 14 13" className="ml-[17px] mr-[21px]"><path d="M.5.500h13v10H9L7.500 12.500 6 10.500H.5z" stroke="#ddd" fill="none" /></svg>
  </div>
);

export default function App() {
  return (
    <div className="relative flex h-[720px] w-[1280px] flex-col overflow-hidden bg-[#f0f0f0]" style={F}>
      <div className="flex h-[19px] shrink-0 items-center bg-white pl-[2px] text-[9.6px] text-[#8f8f8f]">
        <svg width="13" height="14" viewBox="0 0 13 14"><rect x="0" y="0" width="13" height="10" fill="#3d9a5c" /><rect x="2" y="2" width="9" height="5" fill="#cfe8d4" /><rect x="2" y="10" width="11" height="4" fill="#aaa" /></svg>
        <span className="ml-[3px]">2 Board - C:\Users\STARGAZER\Documents\EAGLE\projects\FINAL\Matrix1.brd - EAGLE 9.4.2 education</span>
        <div className="ml-auto flex items-center gap-[30px] pr-[11px]">
          <svg width="10" height="10" viewBox="0 0 10 10"><path d="M0 5h10" stroke="#ccc" /></svg>
          <svg width="10" height="10" viewBox="0 0 10 10"><path d="M.5 2.500h7v7h-7zM2.500 2.500v-2h7v7h-2" stroke="#aaa" fill="none" /></svg>
          <svg width="10" height="10" viewBox="0 0 10 10"><path d="M.5.500l9 9M9.500.500l-9 9" stroke="#aaa" /></svg>
        </div>
      </div>
      <div className="flex h-[24px] shrink-0 items-center gap-[4px] bg-[#c9c9c9] pl-[4px] text-[9.5px] text-[#444]">
        {["File", "Edit", "Draw", "View", "Tools", "Library", "Options", "Window", "Help"].map((m) => (
          <span key={m}>{m}</span>
        ))}
      </div>
      <Toolbar />
      <LayerBar />
      <div className="flex min-h-0 flex-1">
        <ToolColumn />
        <LeftPanel />
        <Canvas />
      </div>
      <div className="flex h-[16px] shrink-0 items-center justify-end border-t border-[#a8a8a8] bg-[#f0f0f0] pr-[18px]">
        <svg width="14" height="12" viewBox="0 0 14 12"><path d="M8 0L1 7h5l-2 5 9-7H8l2-5z" fill="#2fae4e" /></svg>
      </div>
      <Taskbar />
      <Dialog />
      <svg className="absolute left-[391px] top-[641px]" width="14" height="14" viewBox="0 0 14 14"><path d="M7 0v5M7 9v5M0 7h5M9 7h5" stroke="#ddd" /><path d="M5 2h4M5 12h4M2 5v4M12 5v4" stroke="#999" /></svg>
    </div>
  );
}
